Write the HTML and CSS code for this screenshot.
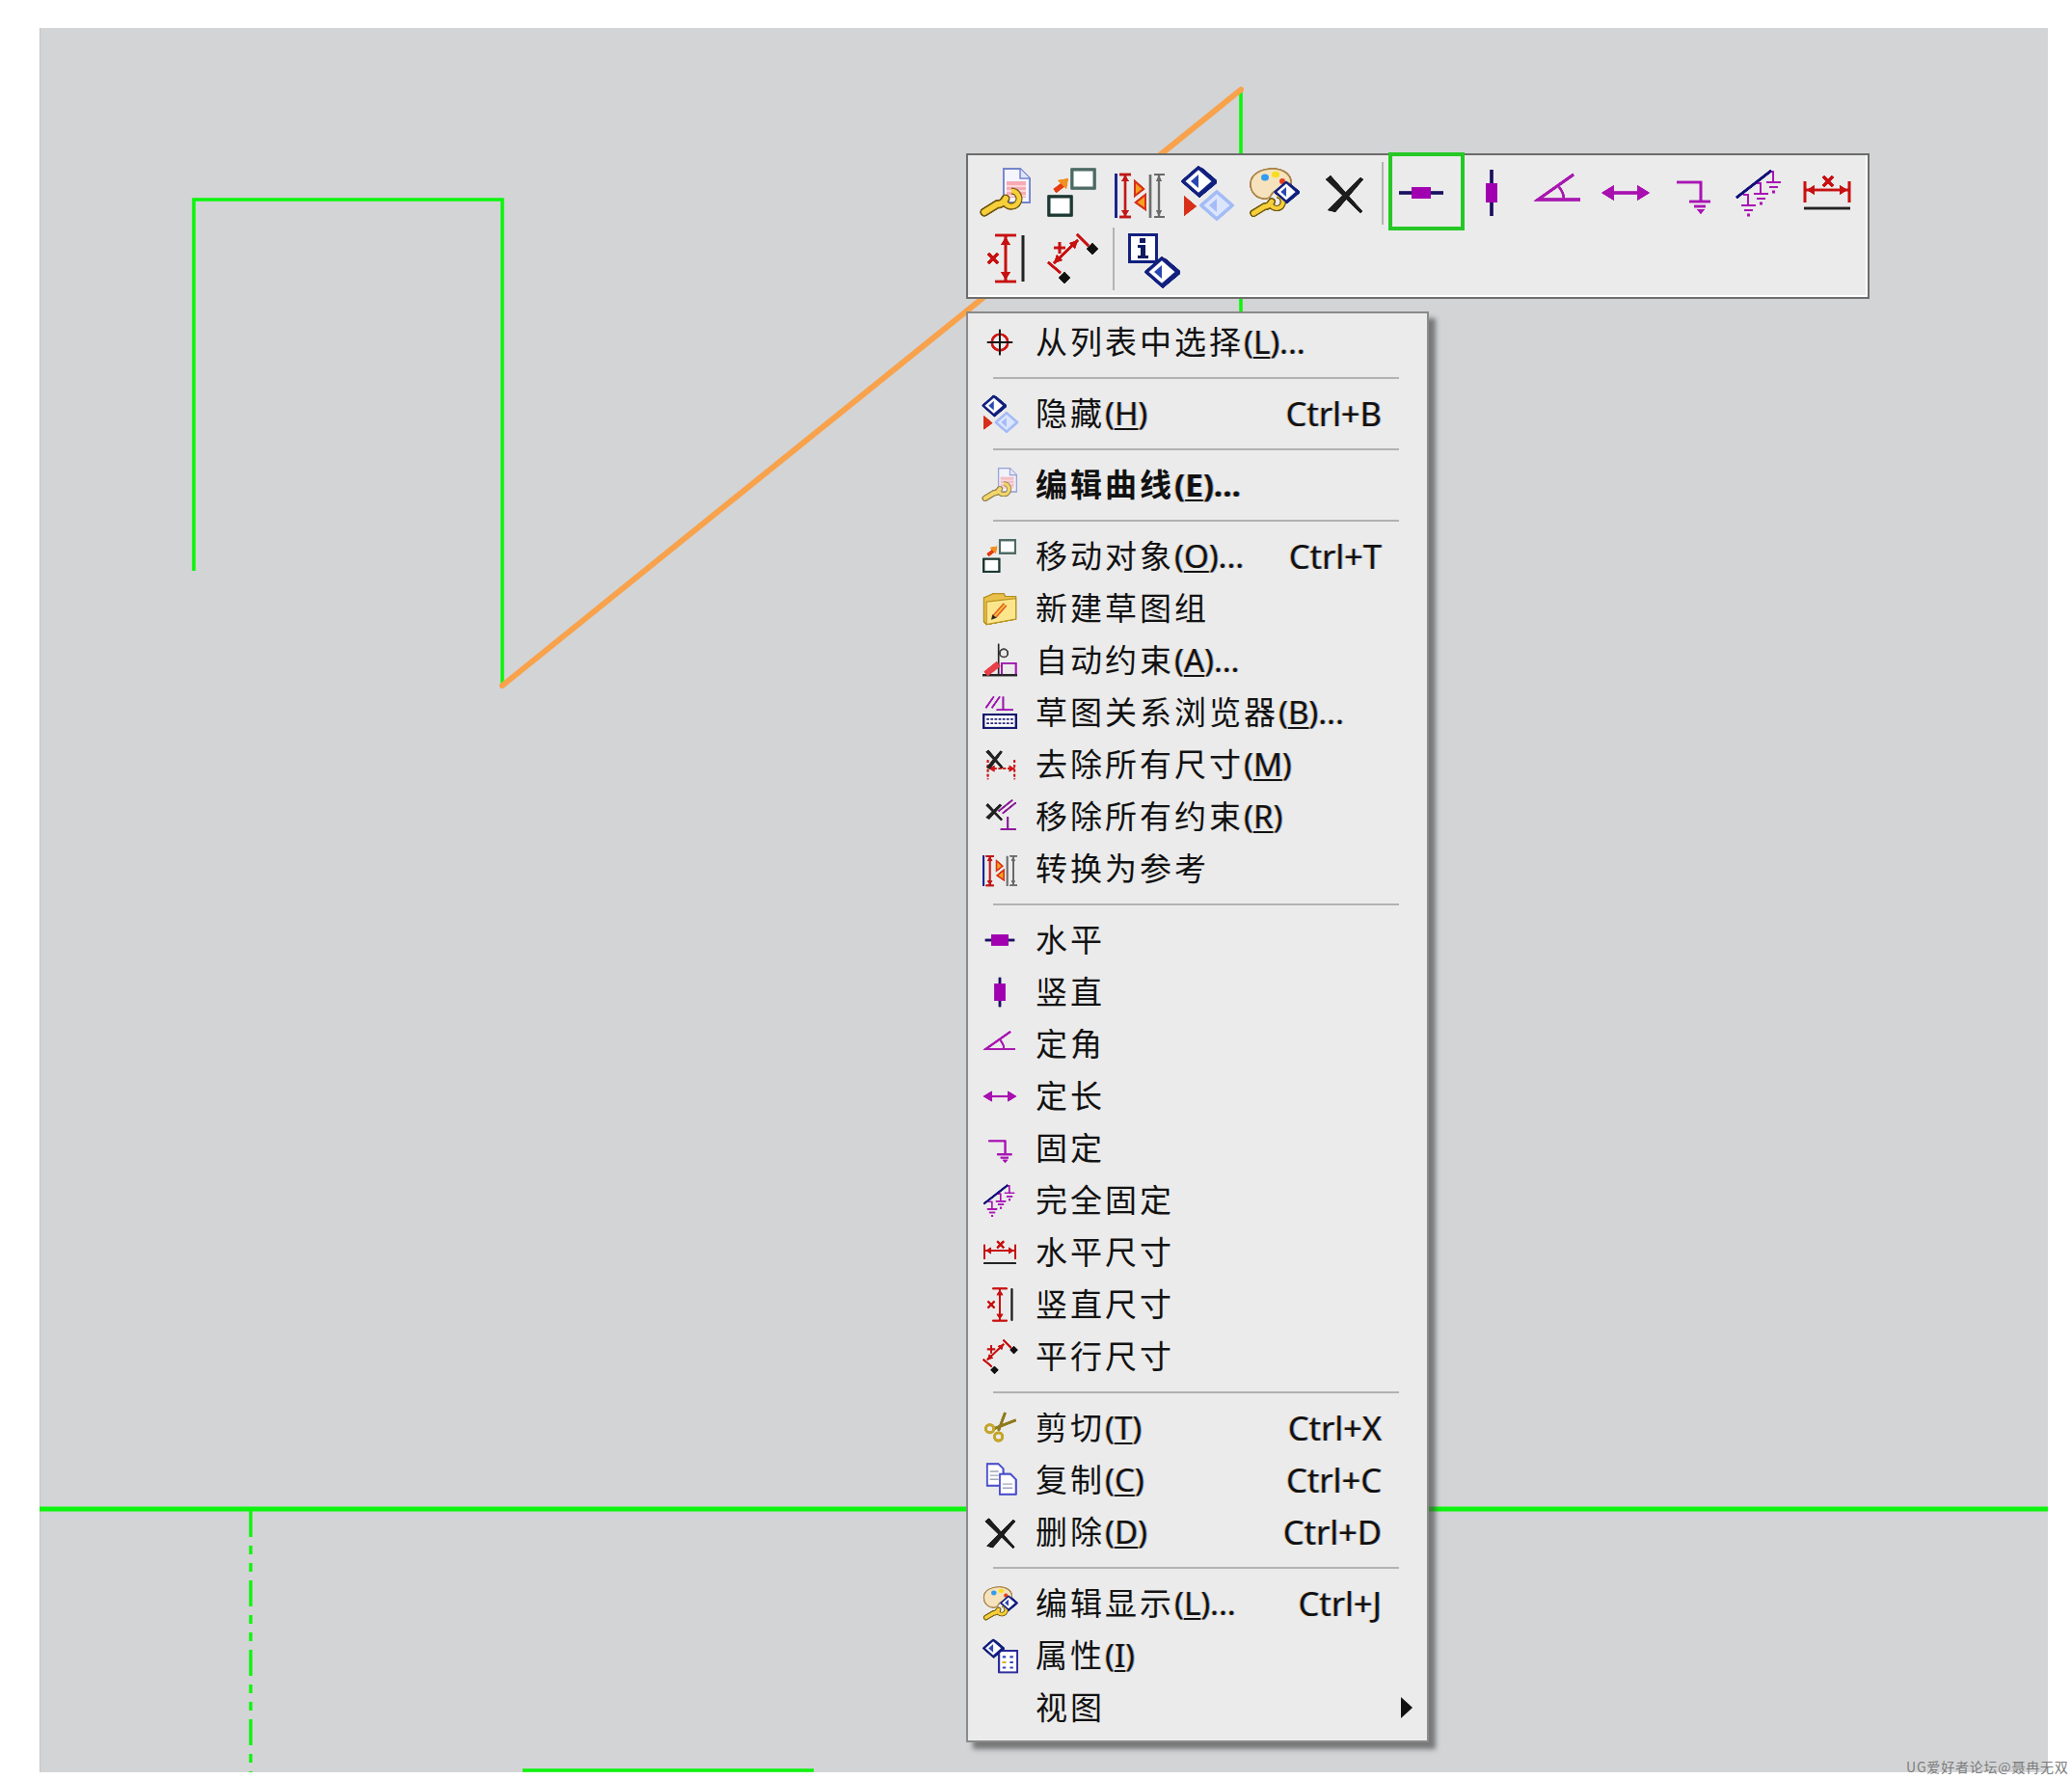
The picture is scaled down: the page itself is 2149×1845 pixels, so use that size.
FILE: index.html
```html
<!DOCTYPE html>
<html lang="zh-CN">
<head>
<meta charset="utf-8">
<title>草图</title>
<link rel="stylesheet" href="styles.css">
</head>
<body>
<svg class="defs" xmlns="http://www.w3.org/2000/svg" aria-hidden="true">
  <defs>
    <filter id="soft" x="-10%" y="-10%" width="120%" height="120%" color-interpolation-filters="sRGB">
      <feGaussianBlur stdDeviation="0.5"/>
      <feComponentTransfer><feFuncA type="linear" slope="1.7"/></feComponentTransfer>
    </filter>
    <g id="dia-navy">
      <polygon points="0,-14 16,0 0,14 -16,0" fill="#fff" stroke="#12207e" stroke-width="3.4" stroke-linejoin="round"/>
      <polygon points="2,-15 5,-13 19,-1 19,2 1,17 -1,15 16,0" fill="#12207e"/>
      <polygon points="0,-7 0,7 -8,0" fill="#2a48b0"/>
    </g>
    <g id="dia-light">
      <polygon points="0,-14 16,0 0,14 -16,0" fill="#dbe5fd" stroke="#a4bcf6" stroke-width="3.4" stroke-linejoin="round"/>
      <polygon points="0,-7 0,7 -8,0" fill="#a4bcf6"/>
    </g>
    <g id="wrench">
      <path d="M5 46 L18 38 Q24 38 27 32" fill="none" stroke="#6f5710" stroke-width="9" stroke-linecap="round"/>
      <path d="M26 36 A8 8 0 1 0 33 24" fill="none" stroke="#6f5710" stroke-width="7"/>
      <path d="M5 46 L18 38 Q24 38 27 32" fill="none" stroke="#f6cf3a" stroke-width="6" stroke-linecap="round"/>
      <path d="M26 36 A8 8 0 1 0 33 24" fill="none" stroke="#f6cf3a" stroke-width="4.6"/>
    </g>
    <g id="ground" fill="none" stroke="#a814b4" stroke-width="2">
      <path d="M9 28H14V39M7 39H22M10 44H19"/>
      <path d="M13 49H16" stroke-width="2.6"/>
    </g>

    <symbol id="i-edit" viewBox="0 0 52 52" overflow="visible">
      <path d="M24 1H41L51 11V36H24Z" fill="#f4f5ff" stroke="#7484cc" stroke-width="1.8"/>
      <path d="M41 1V11H51" fill="#dfe4fb" stroke="#7484cc" stroke-width="1.5"/>
      <rect x="27" y="14" width="20" height="17" fill="#f7aab4"/>
      <path d="M27 19H47M27 24H47M27 29H47" stroke="#fde6e6" stroke-width="1.4"/>
      <use href="#wrench" x="-1" y="0"/>
    </symbol>
    <symbol id="i-move" viewBox="0 0 52 52" overflow="visible">
      <rect x="26" y="2" width="23" height="19" fill="#fff" stroke="#4d6a64" stroke-width="3"/>
      <rect x="2" y="30" width="23" height="19" fill="#fff" stroke="#1c3833" stroke-width="3"/>
      <path d="M8 24 L16 18" stroke="#e63a12" stroke-width="5"/>
      <polygon points="22,11 20,22 11,13" fill="#f29020"/>
    </symbol>
    <symbol id="i-convert" viewBox="0 0 52 52" overflow="visible">
      <path d="M1.5 6V52" stroke="#1a2490" stroke-width="3"/>
      <path d="M5 7H17M5 51H17M11 7V51" stroke="#c01818" stroke-width="2.4" fill="none"/>
      <path d="M11 8L15 14H7ZM11 50L15 44H7Z" fill="#c01818"/>
      <path d="M21 14L30 22L21 29Z" fill="#f6a020" stroke="#d83018" stroke-width="2"/>
      <path d="M32 28L22 36L32 43Z" fill="#f6a020" stroke="#d83018" stroke-width="2"/>
      <path d="M37 7V52" stroke="#6e6e6e" stroke-width="2.4"/>
      <path d="M41 7H52M41 51H52M46 7V51" stroke="#6a6a6a" stroke-width="2.2" fill="none"/>
      <path d="M46 8L49 14H43ZM46 50L49 44H43Z" fill="#6a6a6a"/>
    </symbol>
    <symbol id="i-hide" viewBox="0 0 52 52" overflow="visible">
      <use href="#dia-navy" x="17" y="14"/>
      <use href="#dia-light" x="36" y="39"/>
      <polygon points="2,29 15,40 2,50" fill="#d83018"/>
    </symbol>
    <symbol id="i-display" viewBox="0 0 52 52" overflow="visible">
      <path d="M2 17C2 6 14 1 25 1C36 1 44 7 44 15C44 25 32 21 26 25C22 28 24 32 17 32C9 32 2 26 2 17Z" fill="#f6e2bc" stroke="#a98448" stroke-width="1.6"/>
      <ellipse cx="17" cy="10" rx="4" ry="3.6" fill="#2f9df0"/>
      <ellipse cx="28" cy="7" rx="4" ry="3.2" fill="#f6de1e"/>
      <ellipse cx="35" cy="14" rx="3" ry="3" fill="#e4401c"/>
      <g transform="translate(1 8) scale(.85)"><use href="#wrench"/></g>
      <g transform="translate(39 25) scale(.72)"><use href="#dia-navy"/></g>
    </symbol>
    <symbol id="i-delete" viewBox="0 0 52 52" overflow="visible">
      <polygon points="7,12 12,8 45,45 43,47" fill="#1d1d1d"/>
      <polygon points="43,10 46,12 17,46 9,44" fill="#1d1d1d"/>
    </symbol>
    <symbol id="i-h" viewBox="0 0 52 52" overflow="visible">
      <path d="M3 26H49" stroke="#1a1060" stroke-width="3"/>
      <rect x="16" y="20" width="20" height="12" fill="#a000b0"/>
    </symbol>
    <symbol id="i-v" viewBox="0 0 52 52" overflow="visible">
      <path d="M26 2V50" stroke="#1a1060" stroke-width="3"/>
      <rect x="20" y="16" width="12" height="20" fill="#a000b0"/>
    </symbol>
    <symbol id="i-hm" viewBox="0 0 52 52" overflow="visible">
      <path d="M4 26H48" stroke="#1a1060" stroke-width="3.6"/>
      <rect x="13" y="18" width="26" height="16" fill="#a000b0"/>
    </symbol>
    <symbol id="i-vm" viewBox="0 0 52 52" overflow="visible">
      <path d="M26 4V48" stroke="#1a1060" stroke-width="3.6"/>
      <rect x="18" y="13" width="16" height="26" fill="#a000b0"/>
    </symbol>
    <symbol id="i-angle" viewBox="0 0 52 52" overflow="visible">
      <path d="M49 33H5L42 7" fill="none" stroke="#a818b0" stroke-width="2.8"/>
      <path d="M27 20Q32 26 32 33" fill="none" stroke="#a818b0" stroke-width="2.4"/>
    </symbol>
    <symbol id="i-length" viewBox="0 0 52 52" overflow="visible">
      <path d="M12 26H40" stroke="#a810b0" stroke-width="3"/>
      <path d="M1 26L14 18V34ZM51 26L38 18V34Z" fill="#a810b0"/>
    </symbol>
    <symbol id="i-fix" viewBox="0 0 52 52" overflow="visible">
      <path d="M9 15H34V35M22 35H44M27 40H39" fill="none" stroke="#a814b4" stroke-width="2.6"/>
      <path d="M30 43H38L34 48Z" fill="#a814b4"/>
    </symbol>
    <symbol id="i-fixall" viewBox="0 0 52 52" overflow="visible">
      <use href="#ground"/>
      <use href="#ground" x="13" y="-12"/>
      <use href="#ground" x="26" y="-24"/>
      <path d="M2 31L38 3" stroke="#12107a" stroke-width="2.8"/>
    </symbol>
    <symbol id="i-hdim" viewBox="0 0 52 52" overflow="visible">
      <path d="M3 14V36M49 14V36M3 23H49" stroke="#c81010" stroke-width="2.6" fill="none"/>
      <path d="M5 23L13 18V28ZM47 23L39 18V28Z" fill="#c81010"/>
      <path d="M22 9L32 19M32 9L22 19" stroke="#c81010" stroke-width="3"/>
      <path d="M2 42H50" stroke="#222" stroke-width="2.6"/>
    </symbol>
    <symbol id="i-vdim" viewBox="0 0 52 52" overflow="visible">
      <path d="M15 2H37M15 50H37M26 2V50" stroke="#c81010" stroke-width="2.6" fill="none"/>
      <path d="M26 4L31 12H21ZM26 48L31 40H21Z" fill="#c81010"/>
      <path d="M8 21L18 31M18 21L8 31" stroke="#c81010" stroke-width="3"/>
      <path d="M44 2V50" stroke="#222" stroke-width="2.6"/>
    </symbol>
    <symbol id="i-pdim" viewBox="0 0 52 52" overflow="visible">
      <path d="M7 31L32 7M1 30L14 41M31 1L43 13" stroke="#c81010" stroke-width="2.6" fill="none"/>
      <path d="M32 7L29 16L23 10ZM7 31L10 22L16 28Z" fill="#c81010"/>
      <path d="M7 15H19M13 9V21" stroke="#c81010" stroke-width="2.6"/>
      <path d="M47 10L53 16L47 22L41 16ZM18 40L24 46L18 52L12 46Z" fill="#111"/>
    </symbol>
    <symbol id="i-info" viewBox="0 0 52 52" overflow="visible">
      <rect x="1.5" y="1.5" width="28" height="28" fill="#fff" stroke="#12207e" stroke-width="3"/>
      <rect x="12" y="5" width="6" height="5" fill="#101a60"/>
      <path d="M10 12H18V23H21V26H10V23H13V15H10Z" fill="#101a60"/>
      <use href="#dia-navy" x="35" y="40"/>
    </symbol>
    <symbol id="i-target" viewBox="0 0 52 52" overflow="visible">
      <circle cx="26" cy="26" r="12" fill="none" stroke="#d01818" stroke-width="3.4"/>
      <path d="M26 7V45M7 26H45" stroke="#141414" stroke-width="2.8"/>
    </symbol>
    <symbol id="i-folder" viewBox="0 0 52 52" overflow="visible">
      <path d="M2 10L16 4H32L34 8H50V42L6 50L2 46Z" fill="#eac04c" stroke="#b08c20" stroke-width="1.5"/>
      <path d="M6 16L50 11V42L6 50Z" fill="#fbe68c" stroke="#b8941e" stroke-width="1.6"/>
      <path d="M18 38L34 20" stroke="#e2522a" stroke-width="7"/>
      <path d="M18 38L34 20" stroke="#f6c02e" stroke-width="3"/>
      <polygon points="13,43 15,35 21,40" fill="#222"/>
    </symbol>
    <symbol id="i-auto" viewBox="0 0 52 52" overflow="visible">
      <path d="M29 48V30H50V48" fill="none" stroke="#a018b0" stroke-width="2.4"/>
      <path d="M24 1V48" stroke="#222" stroke-width="2"/>
      <circle cx="32" cy="15" r="6" fill="none" stroke="#444" stroke-width="2"/>
      <path d="M0 48H52" stroke="#222" stroke-width="2.6"/>
      <path d="M5 46L24 31" stroke="#e8404a" stroke-width="9"/>
    </symbol>
    <symbol id="i-browser" viewBox="0 0 52 52" overflow="visible">
      <path d="M5 19L17 2M14 19L26 2M31 2V22M21 22H46" fill="none" stroke="#a018b0" stroke-width="2.4"/>
      <rect x="2" y="29" width="48" height="20" fill="#fff" stroke="#12186e" stroke-width="3"/>
      <path d="M6 36H46M6 42H46" stroke="#2a2a7a" stroke-width="2.4" stroke-dasharray="4 2"/>
    </symbol>
    <symbol id="i-nodim" viewBox="0 0 52 52" overflow="visible">
      <path d="M8 19V48M48 19V48M10 32H48" stroke="#d01818" stroke-width="2.6" stroke-dasharray="4 3" fill="none"/>
      <path d="M10 32L18 27V37ZM48 32L40 27V37Z" fill="#d01818"/>
      <polygon points="5,7 9,4 31,30 29,32" fill="#222"/>
      <polygon points="27,5 30,7 11,33 6,30" fill="#222"/>
    </symbol>
    <symbol id="i-nocon" viewBox="0 0 52 52" overflow="visible">
      <path d="M24 18L45 1M30 21L50 5M38 26V45M27 45H50" fill="none" stroke="#8a1a98" stroke-width="2.4"/>
      <polygon points="5,9 8,6 30,30 28,32" fill="#222"/>
      <polygon points="26,7 29,9 10,30 5,27" fill="#222"/>
    </symbol>
    <symbol id="i-cut" viewBox="0 0 52 52" overflow="visible">
      <path d="M34 3L24 30M50 14L17 27" stroke="#8f7a1e" stroke-width="3.8" fill="none"/>
      <circle cx="11" cy="27" r="6" fill="none" stroke="#c4a62c" stroke-width="4"/>
      <circle cx="24" cy="39" r="6" fill="none" stroke="#c4a62c" stroke-width="4"/>
    </symbol>
    <symbol id="i-copy" viewBox="0 0 52 52" overflow="visible">
      <path d="M7 2H24L31 9V34H7Z" fill="#fff" stroke="#4a4ecc" stroke-width="2.6"/>
      <path d="M11 13H24M11 19H24M11 25H24" stroke="#a0a4b8" stroke-width="2"/>
      <path d="M26 17H42L50 25V47H26Z" fill="#fff" stroke="#4a4ecc" stroke-width="2.6"/>
      <path d="M30 32H45M30 38H45" stroke="#a0a4b8" stroke-width="2"/>
    </symbol>
    <symbol id="i-props" viewBox="0 0 52 52" overflow="visible">
      <rect x="25" y="19" width="27" height="32" fill="#fff" stroke="#2a2a9c" stroke-width="2.6"/>
      <path d="M30 28H35M41 28H46M30 36H35M41 36H46M30 44H35M41 44H46" stroke="#3a4ab8" stroke-width="3"/>
      <path d="M30 36H35" stroke="#e0b81c" stroke-width="3"/>
      <g transform="translate(16 15) scale(.88)"><use href="#dia-navy"/></g>
    </symbol>
  </defs>
</svg>

<main class="canvas">
  <svg class="sketch" viewBox="41 29 2083 1809" xmlns="http://www.w3.org/2000/svg">
    <path class="curve" d="M201 592V207H521V711"/>
    <path class="curve" d="M1287 93V400"/>
    <path class="curve-sel" d="M521 711L1287 93"/>
    <path class="axis" d="M41 1565H2124"/>
    <path class="dash" d="M260 1567V1838"/>
    <path class="curve" d="M542 1836H844"/>
  </svg>

  <section class="toolbar">
    <div class="tb-row">
      <span class="tool"><svg class="ti"><use href="#i-edit"/></svg></span>
      <span class="tool"><svg class="ti"><use href="#i-move"/></svg></span>
      <span class="tool"><svg class="ti"><use href="#i-convert"/></svg></span>
      <span class="tool"><svg class="ti"><use href="#i-hide"/></svg></span>
      <span class="tool"><svg class="ti"><use href="#i-display"/></svg></span>
      <span class="tool tool-x"><svg class="ti"><use href="#i-delete"/></svg></span>
      <span class="tb-sep tb-sep-a"></span>
      <span class="tool selected"><svg class="ti"><use href="#i-h"/></svg></span>
      <span class="tool"><svg class="ti"><use href="#i-v"/></svg></span>
      <span class="tool"><svg class="ti"><use href="#i-angle"/></svg></span>
      <span class="tool"><svg class="ti"><use href="#i-length"/></svg></span>
      <span class="tool"><svg class="ti"><use href="#i-fix"/></svg></span>
      <span class="tool"><svg class="ti"><use href="#i-fixall"/></svg></span>
      <span class="tool"><svg class="ti"><use href="#i-hdim"/></svg></span>
    </div>
    <div class="tb-row">
      <span class="tool"><svg class="ti"><use href="#i-vdim"/></svg></span>
      <span class="tool"><svg class="ti"><use href="#i-pdim"/></svg></span>
      <span class="tb-sep tb-sep-b"></span>
      <span class="tool"><svg class="ti"><use href="#i-info"/></svg></span>
    </div>
  </section>

  <nav class="menu">
    <div class="row"><svg class="mi"><use href="#i-target"/></svg><span class="label">从列表中选择<span class="m">(<u>L</u>)...</span></span></div>
    <div class="sep"></div>
    <div class="row"><svg class="mi"><use href="#i-hide"/></svg><span class="label">隐藏<span class="m">(<u>H</u>)</span></span><span class="key">Ctrl+B</span></div>
    <div class="sep"></div>
    <div class="row"><svg class="mi faded"><use href="#i-edit"/></svg><span class="label bold">编辑曲线<span class="m">(<u>E</u>)...</span></span></div>
    <div class="sep"></div>
    <div class="row"><svg class="mi"><use href="#i-move"/></svg><span class="label">移动对象<span class="m">(<u>O</u>)...</span></span><span class="key">Ctrl+T</span></div>
    <div class="row"><svg class="mi"><use href="#i-folder"/></svg><span class="label">新建草图组</span></div>
    <div class="row"><svg class="mi"><use href="#i-auto"/></svg><span class="label">自动约束<span class="m">(<u>A</u>)...</span></span></div>
    <div class="row"><svg class="mi"><use href="#i-browser"/></svg><span class="label">草图关系浏览器<span class="m">(<u>B</u>)...</span></span></div>
    <div class="row"><svg class="mi"><use href="#i-nodim"/></svg><span class="label">去除所有尺寸<span class="m">(<u>M</u>)</span></span></div>
    <div class="row"><svg class="mi"><use href="#i-nocon"/></svg><span class="label">移除所有约束<span class="m">(<u>R</u>)</span></span></div>
    <div class="row"><svg class="mi"><use href="#i-convert"/></svg><span class="label">转换为参考</span></div>
    <div class="sep"></div>
    <div class="row"><svg class="mi"><use href="#i-hm"/></svg><span class="label">水平</span></div>
    <div class="row"><svg class="mi"><use href="#i-vm"/></svg><span class="label">竖直</span></div>
    <div class="row"><svg class="mi"><use href="#i-angle"/></svg><span class="label">定角</span></div>
    <div class="row"><svg class="mi"><use href="#i-length"/></svg><span class="label">定长</span></div>
    <div class="row"><svg class="mi"><use href="#i-fix"/></svg><span class="label">固定</span></div>
    <div class="row"><svg class="mi"><use href="#i-fixall"/></svg><span class="label">完全固定</span></div>
    <div class="row"><svg class="mi"><use href="#i-hdim"/></svg><span class="label">水平尺寸</span></div>
    <div class="row"><svg class="mi"><use href="#i-vdim"/></svg><span class="label">竖直尺寸</span></div>
    <div class="row"><svg class="mi"><use href="#i-pdim"/></svg><span class="label">平行尺寸</span></div>
    <div class="sep"></div>
    <div class="row"><svg class="mi"><use href="#i-cut"/></svg><span class="label">剪切<span class="m">(<u>T</u>)</span></span><span class="key">Ctrl+X</span></div>
    <div class="row"><svg class="mi"><use href="#i-copy"/></svg><span class="label">复制<span class="m">(<u>C</u>)</span></span><span class="key">Ctrl+C</span></div>
    <div class="row"><svg class="mi mi-x"><use href="#i-delete"/></svg><span class="label">删除<span class="m">(<u>D</u>)</span></span><span class="key">Ctrl+D</span></div>
    <div class="sep"></div>
    <div class="row"><svg class="mi"><use href="#i-display"/></svg><span class="label">编辑显示<span class="m">(<u>L</u>)...</span></span><span class="key">Ctrl+J</span></div>
    <div class="row"><svg class="mi"><use href="#i-props"/></svg><span class="label">属性<span class="m">(<u>I</u>)</span></span></div>
    <div class="row"><span class="mi"></span><span class="label">视图</span><span class="arrow"></span></div>
  </nav>
</main>
<p class="watermark">UG爱好者论坛@聂冉无双</p>
</body>
</html>
```

FILE: styles.css
```css
html, body {
  margin: 0;
  padding: 0;
  background: #fff;
}
body {
  position: relative;
  width: 2149px;
  height: 1845px;
  overflow: hidden;
  padding-top: 29px;
  box-sizing: border-box;
  font-family: "Noto Sans", "Noto Sans CJK SC", sans-serif;
  color: #111;
}
.defs {
  position: absolute;
  width: 0;
  height: 0;
}
.canvas {
  position: relative;
  width: 2083px;
  height: 1809px;
  margin-left: 41px;
  background: #d3d4d6;
  box-shadow: inset 1px 0 0 #c4c5c8;
}
.sketch {
  display: block;
  width: 2083px;
  height: 1809px;
}
.curve, .axis, .dash, .curve-sel {
  fill: none;
  stroke: #0cf50c;
}
.curve { stroke-width: 3.6; }
.axis { stroke-width: 5; }
.dash {
  stroke-width: 3.4;
  stroke-dasharray: 27 9 9 9 9 9;
}
.curve-sel {
  stroke: #f8a24c;
  stroke-width: 6;
  stroke-linecap: round;
}

/* Floating toolbar */
.toolbar {
  position: absolute;
  left: 961px;
  top: 130px;
  width: 937px;
  height: 151px;
  box-sizing: border-box;
  padding: 7px 0 0 4px;
  display: flex;
  flex-direction: column;
  gap: 3px;
  background: #ebebeb;
  border: 2px solid #6c6c6c;
  box-shadow: inset -2px -2px 0 #fff;
}
.tb-row {
  display: flex;
  height: 65px;
}
.tool {
  position: relative;
  display: flex;
  align-items: center;
  justify-content: center;
  box-sizing: border-box;
  width: 69.6px;
  height: 64px;
}
.tool-x { padding-left: 6px; }
.tool.selected {
  width: 68px;
  padding-right: 7px;
}
.tool.selected::after {
  content: "";
  position: absolute;
  top: -10px;
  right: -7px;
  bottom: -7px;
  left: -4px;
  border: 4px solid #25c825;
}
.ti {
  width: 52px;
  height: 52px;
  overflow: visible;
  flex: none;
  filter: url(#soft);
}
.tb-sep {
  flex: none;
  width: 2px;
  background: #b4b4b4;
}
.tb-sep-a { margin: 0 9px 0 7.4px; }
.tb-sep-b { margin: 0 5px 0 7px; }

/* Context menu */
.menu {
  position: absolute;
  left: 961px;
  top: 294px;
  width: 480px;
  height: 1484px;
  box-sizing: border-box;
  padding: 3px 0 7px;
  background: #ebebeb;
  border: 2px solid #8a8a8a;
  box-shadow: 7px 7px 5px rgba(70, 70, 70, .65);
}
.row {
  display: flex;
  align-items: center;
  height: 54px;
  padding: 0 47px 0 15px;
  font-size: 34px;
  line-height: 1;
}
.mi {
  flex: none;
  width: 36px;
  height: 36px;
  margin-right: 19px;
  overflow: visible;
  filter: url(#soft);
}
.mi-x {
  width: 42px;
  height: 42px;
  margin: 0 16px 0 -3px;
}
.faded { opacity: .72; }
.label {
  margin-top: -3px;
  font-family: "Noto Sans CJK SC", sans-serif;
  font-size: 33px;
  letter-spacing: 3px;
  white-space: nowrap;
}
.bold { font-weight: 700; }
.m {
  font-family: "Noto Sans", sans-serif;
  font-size: 33px;
  font-weight: 400;
  letter-spacing: 0;
  text-shadow: -1px 0 0 rgba(224, 150, 50, .55), 1px 0 0 rgba(50, 110, 200, .55);
}
.bold .m { font-weight: 700; }
.m u {
  text-underline-offset: 3px;
  text-decoration-thickness: 2px;
}
.key {
  margin-left: auto;
  font-size: 34.5px;
  white-space: nowrap;
  text-shadow: -1px 0 0 rgba(224, 150, 50, .55), 1px 0 0 rgba(50, 110, 200, .55);
}
.sep {
  height: 2px;
  margin: 9px 29px 9px 26px;
  background: #b2b2b2;
}
.arrow {
  margin: 0 -32px 0 auto;
  width: 0;
  height: 0;
  border-style: solid;
  border-width: 11px 0 11px 12px;
  border-color: transparent transparent transparent #111;
}

.watermark {
  position: absolute;
  left: 1977px;
  top: 1823px;
  margin: 0;
  font-family: "Noto Sans CJK SC", sans-serif;
  font-size: 14px;
  line-height: 18px;
  letter-spacing: .8px;
  color: #7c7c7c;
  white-space: nowrap;
}
```
